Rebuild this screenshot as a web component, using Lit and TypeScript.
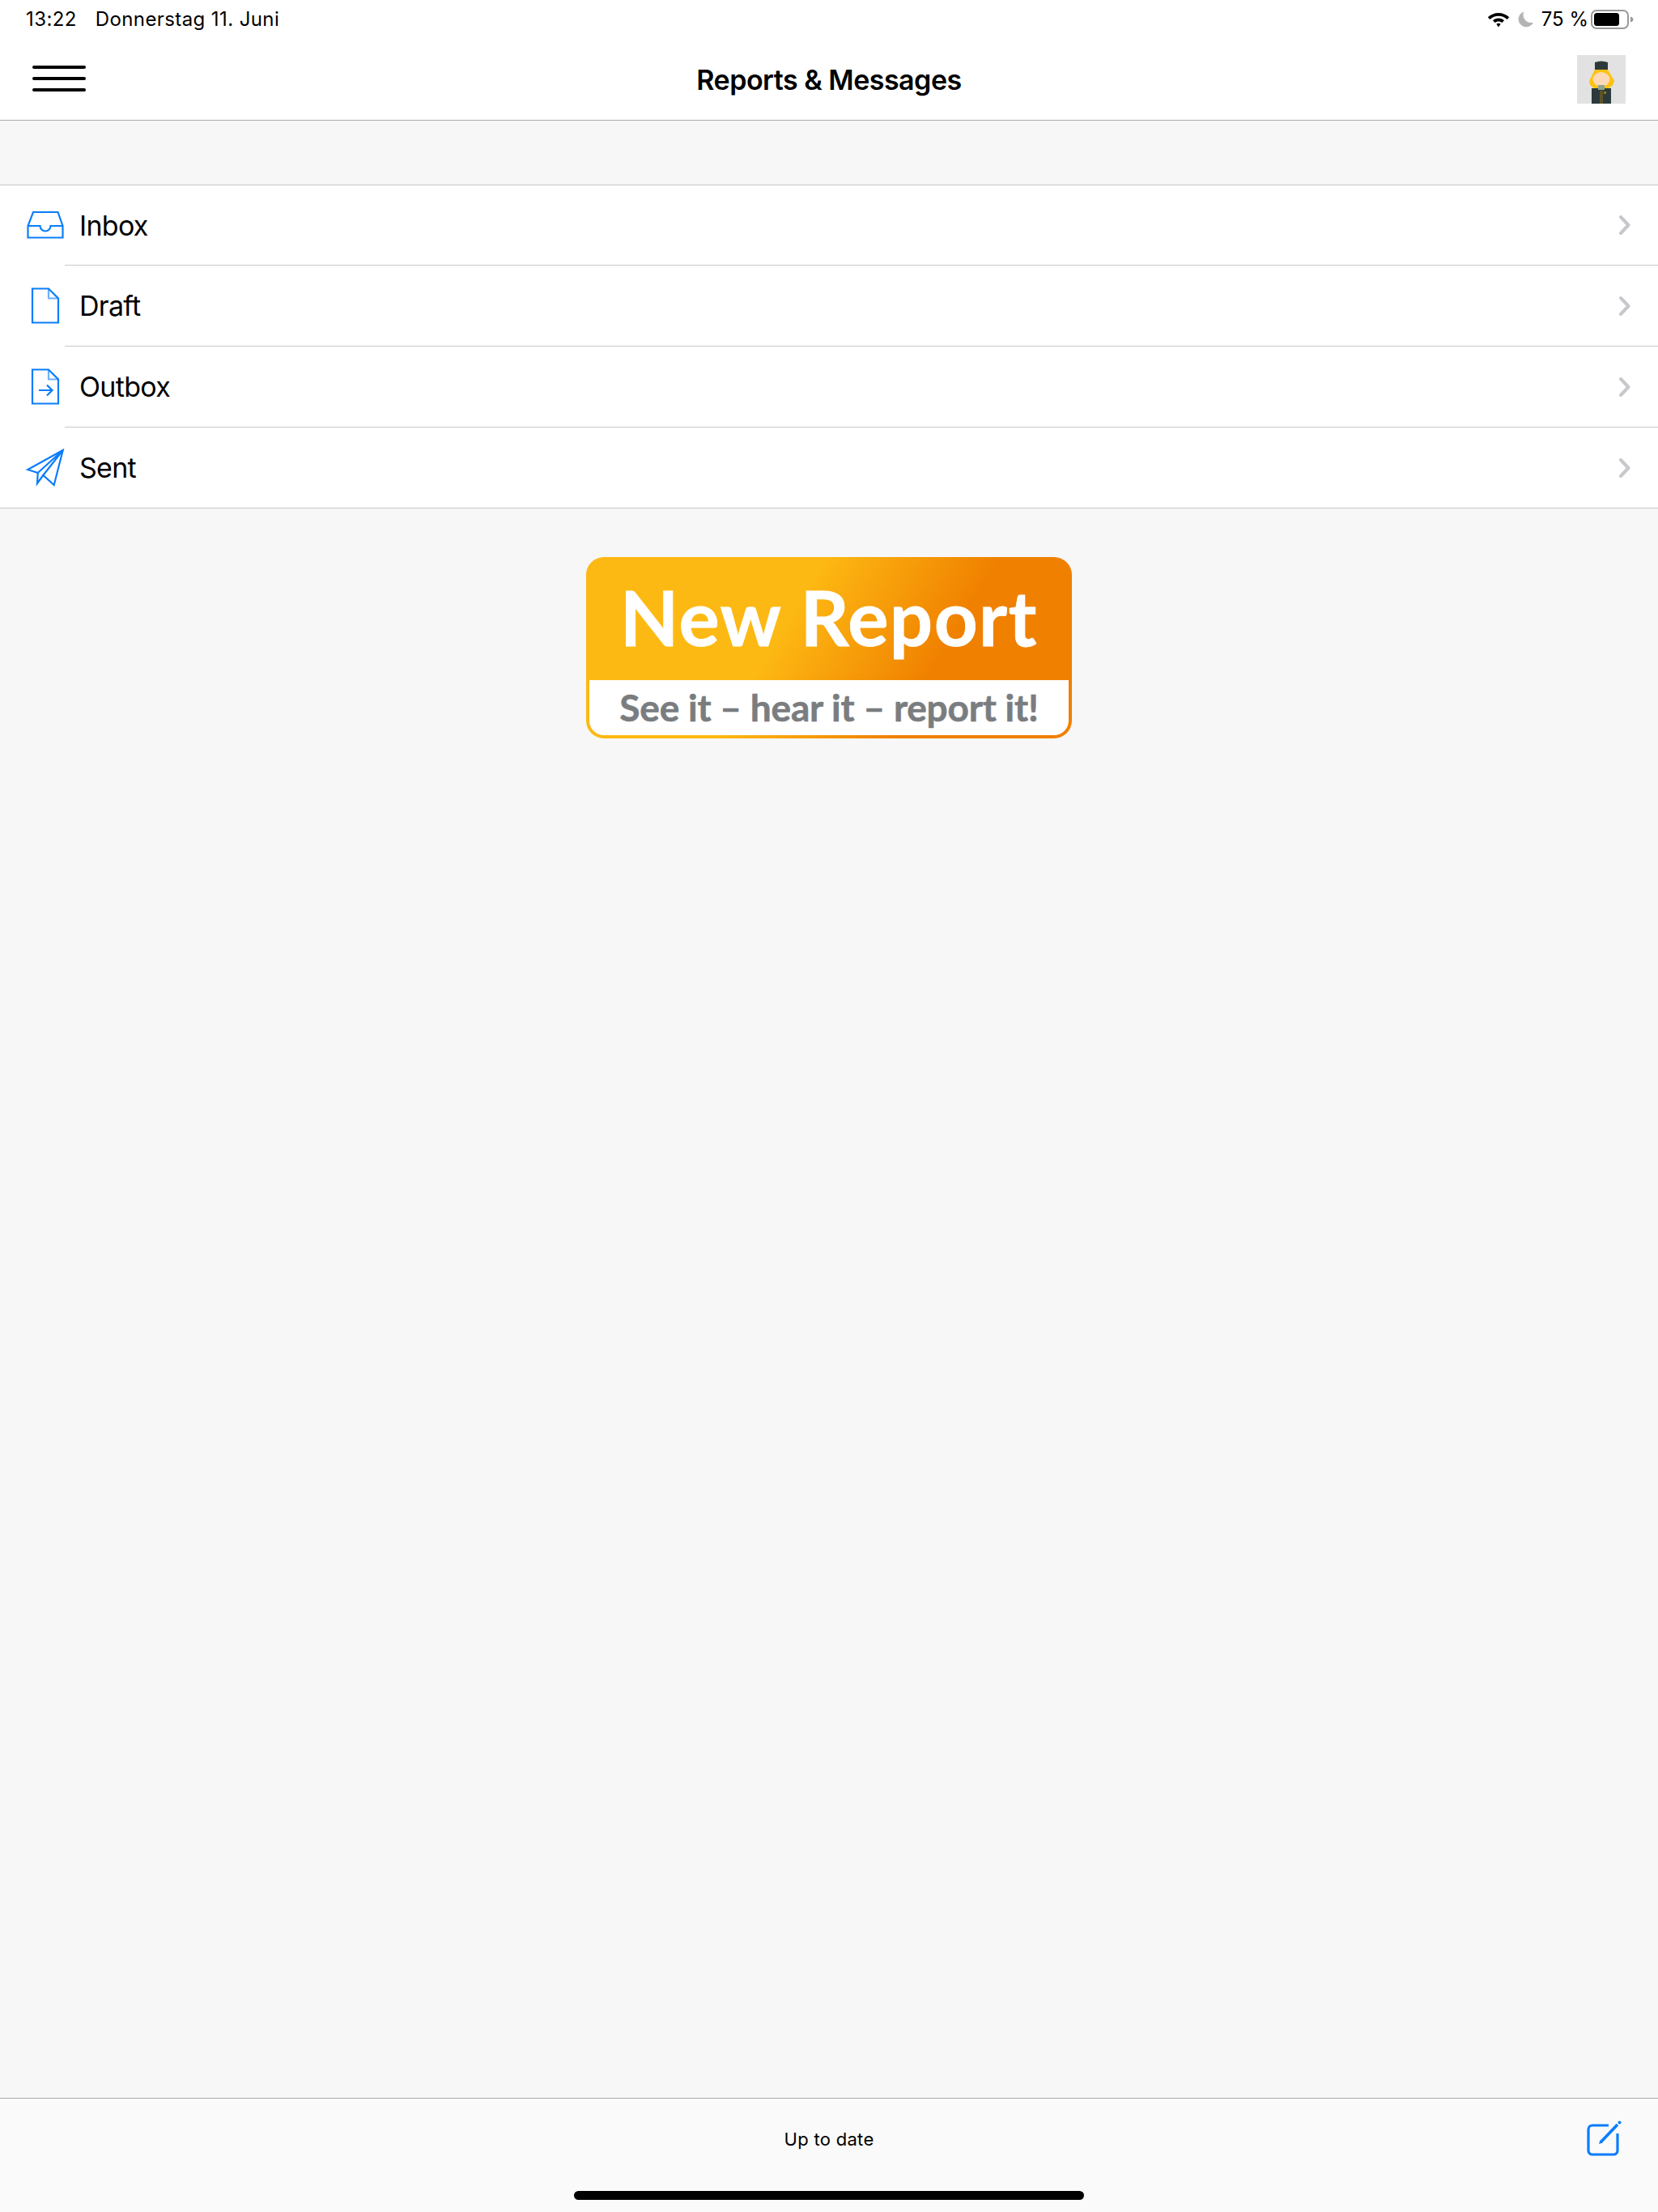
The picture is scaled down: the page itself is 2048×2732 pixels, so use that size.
import { LitElement, html, css, svg } from "lit";
import { customElement } from "lit/decorators.js";

const inbox = svg`<path d="M15 14H45.5L51.5 31V45.5H8.5V31Z"/><path d="M8.5 31H23.5A6.5 6.5 0 0 0 36.5 31H51.5"/>`;
const draft = svg`<path d="M14 8.5H34L46 20.5V50.5H14Z"/><path d="M34 8.5V20.5H46" stroke-opacity=".6"/>`;
const outbox = svg`${draft}<path d="M22 34H38M32 27.5L38.5 34L32 40.5"/>`;
const sent = svg`<path d="M51.7 8L8.3 32L20.7 36L20 49L27.3 39L40.7 51Z"/><path d="M20.7 36L51.7 8L27.3 39"/>`;

const rows = [
  { label: "Inbox", icon: inbox },
  { label: "Draft", icon: draft },
  { label: "Outbox", icon: outbox },
  { label: "Sent", icon: sent },
];

@customElement("app-root")
export class AppRoot extends LitElement {
  static styles = css`
    :host {
      display: flex;
      flex-direction: column;
      width: 2048px;
      height: 2732px;
      background: #f7f7f7;
      color: #000;
      font-family: Inter, "Liberation Sans", sans-serif;
      overflow: hidden;
    }
    .header {
      height: 148px;
      background: #fff;
      border-bottom: 1px solid #aaaaaa;
      display: flex;
      flex-direction: column;
      flex: none;
    }
    .status {
      height: 48px;
      padding: 0 30px 0 32px;
      display: flex;
      align-items: center;
      font-size: 24px;
      line-height: 48px;
      letter-spacing: 0.4px;
      flex: none;
    }
    .time { margin-right: 23px; }
    .spacer { flex: 1; }
    .wifi { margin-right: 10px; }
    .moon { margin-right: 10px; }
    .pct { margin-right: 3px; letter-spacing: 0; }
    .nav {
      flex: 1;
      display: grid;
      grid-template-columns: 1fr auto 1fr;
      align-items: center;
      padding: 0 40px;
    }
    .burger {
      display: flex;
      flex-direction: column;
      gap: 10px;
      width: 66px;
      margin-top: -2px;
    }
    .burger span {
      height: 4px;
      border-radius: 2px;
      background: #000;
    }
    .title {
      font-size: 34px;
      font-weight: 600;
      line-height: 44px;
      letter-spacing: -0.5px;
      margin-top: 2px;
    }
    .avatar {
      justify-self: end;
      display: block;
      width: 60px;
      height: 60px;
    }
    .main {
      flex: 1;
      display: flex;
      flex-direction: column;
      padding-top: 79px;
    }
    .list {
      background: #fff;
      border-top: 1px solid #c8c8c8;
      border-bottom: 1px solid #c8c8c8;
    }
    .row {
      height: 99px;
      display: flex;
      align-items: center;
      padding-left: 26px;
      font-size: 34px;
      letter-spacing: -0.7px;
    }
    .row.first { height: 98px; }
    .sep { height: 1px; background: #c8c8c8; margin-left: 80px; }
    .icon {
      width: 60px;
      height: 60px;
      fill: none;
      stroke: #0b7dfb;
      stroke-width: 2.2;
      flex: none;
    }
    .label { margin-left: 12px; flex: 1; }
    .chev {
      width: 18px;
      height: 28px;
      margin-right: 32px;
      fill: none;
      stroke: #c7c7cc;
      stroke-width: 4;
      stroke-linecap: round;
      stroke-linejoin: round;
    }
    .report {
      align-self: center;
      margin-top: 60px;
      width: 600px;
      height: 224px;
      box-sizing: border-box;
      padding: 0 4px 4px;
      border-radius: 22px;
      display: flex;
      flex-direction: column;
      background: linear-gradient(121deg, #fdb913 0%, #fdb913 40%, #f08000 70%, #f08000 100%);
      font-family: Lato, "Liberation Sans", sans-serif;
      font-weight: 700;
    }
    .report-top {
      height: 152px;
      box-sizing: border-box;
      padding-bottom: 4px;
      color: #fff;
      display: flex;
      align-items: center;
      justify-content: center;
      font-size: 94px;
      letter-spacing: 1.4px;
      line-height: 1;
      flex: none;
      -webkit-text-stroke: 0.8px #fff;
    }
    .report-bottom {
      flex: 1;
      background: #fff;
      border-radius: 0 0 18px 18px;
      color: #7a7d80;
      display: flex;
      align-items: center;
      justify-content: center;
      font-size: 46px;
      line-height: 1;
      letter-spacing: -0.2px;
      -webkit-text-stroke: 0.6px #7a7d80;
    }
    .toolbar {
      height: 141px;
      box-sizing: border-box;
      border-top: 1px solid #aaaaaa;
      background: #fafafa;
      flex: none;
      display: flex;
      flex-direction: column;
      align-items: center;
      position: relative;
    }
    .status-text {
      font-size: 22px;
      line-height: 30px;
      margin-top: 35px;
      letter-spacing: 0.3px;
    }
    .compose {
      position: absolute;
      left: 1957px;
      top: 26px;
      width: 52px;
      height: 52px;
    }
    .home {
      width: 630px;
      height: 11px;
      border-radius: 6px;
      background: #000;
      margin-top: 49px;
    }
  `;

  render() {
    return html`
      <div class="header">
        <div class="status">
          <span class="time">13:22</span>
          <span>Donnerstag 11. Juni</span>
          <span class="spacer"></span>
          <svg class="wifi" width="28" height="22" viewBox="0 0 28 22">
            <path fill="#000" d="M14 3C19 3 23.6 5 27.2 8.2L24.6 10.9C21.8 8.4 18 6.8 14 6.8S6.2 8.4 3.4 10.9L.8 8.2C4.4 5 9 3 14 3ZM14 9.6C16.6 9.6 19.2 10.6 21 12.3L18.4 15C17.2 14 15.6 13.4 14 13.4S10.8 14 9.6 15L7 12.3C8.8 10.6 11.4 9.6 14 9.6ZM14 15.8C15 15.8 15.9 16.1 16.6 16.8L14 20.5L11.4 16.8C12.1 16.1 13 15.8 14 15.8Z"/>
          </svg>
          <svg class="moon" width="19" height="20" viewBox="0 0 19 20">
            <path fill="#b4b4b4" d="M7.5 0.5A9.6 9.6 0 1 0 19 13.5A9.5 9.5 0 0 1 7.5 0.5Z"/>
          </svg>
          <span class="pct">75 %</span>
          <svg width="53" height="24" viewBox="0 0 53 24">
            <rect x="1" y="1" width="45" height="22" rx="6" fill="none" stroke="#9a9a9a" stroke-width="2"/>
            <rect x="4" y="4" width="31" height="16" rx="3.5" fill="#000"/>
            <path d="M49 8.5C51 9 52.5 10.5 52.5 12S51 15 49 15.5Z" fill="#9a9a9a"/>
          </svg>
        </div>
        <div class="nav">
          <div class="burger"><span></span><span></span><span></span></div>
          <div class="title">Reports &amp; Messages</div>
          <svg class="avatar" viewBox="0 0 60 60">
            <rect width="60" height="60" fill="#e2e2e2"/>
            <path d="M22 9Q30 6 38 9V20H22Z" fill="#2d3a3c"/>
            <path d="M22 18H38L46 32Q44 40 38 41H22Q16 40 15 32Z" fill="#fdc20f"/>
            <ellipse cx="30" cy="30" rx="10.5" ry="9" fill="#fdd9b5"/>
            <rect x="18" y="41" width="24" height="19" fill="#2b3a3c"/>
            <rect x="26" y="37" width="8" height="6" fill="#8fa58a"/>
            <rect x="28" y="44" width="4" height="16" fill="#5d5328"/>
            <rect x="33" y="45" width="3" height="3" fill="#8a7a20"/>
          </svg>
        </div>
      </div>
      <div class="main">
        <div class="list">
          ${rows.map(
            (r, i) => html`
              ${i > 0 ? html`<div class="sep"></div>` : ""}
              <div class="row ${i === 0 ? "first" : ""}">
                <svg class="icon" viewBox="0 0 60 60">${r.icon}</svg>
                <span class="label">${r.label}</span>
                <svg class="chev" viewBox="0 0 18 28"><path d="M4 4L13.5 14L4 24"/></svg>
              </div>
            `
          )}
        </div>
        <div class="report">
          <div class="report-top">New Report</div>
          <div class="report-bottom">See it – hear it – report it!</div>
        </div>
      </div>
      <div class="toolbar">
        <div class="status-text">Up to date</div>
        <svg class="compose" viewBox="0 0 52 52" fill="none" stroke="#0b7dfb">
          <path d="M30 7H10A5 5 0 0 0 5 12V38A5 5 0 0 0 10 43H36A5 5 0 0 0 41 38V17" stroke-width="3.2"/>
          <path d="M20 28L41 6" stroke-width="3.6"/>
          <path d="M18 30L19.5 25.5L22.5 28.5Z" fill="#0b7dfb" stroke="none"/>
          <circle cx="43.5" cy="3.5" r="2" fill="#0b7dfb" stroke="none"/>
        </svg>
        <div class="home"></div>
      </div>
    `;
  }
}
